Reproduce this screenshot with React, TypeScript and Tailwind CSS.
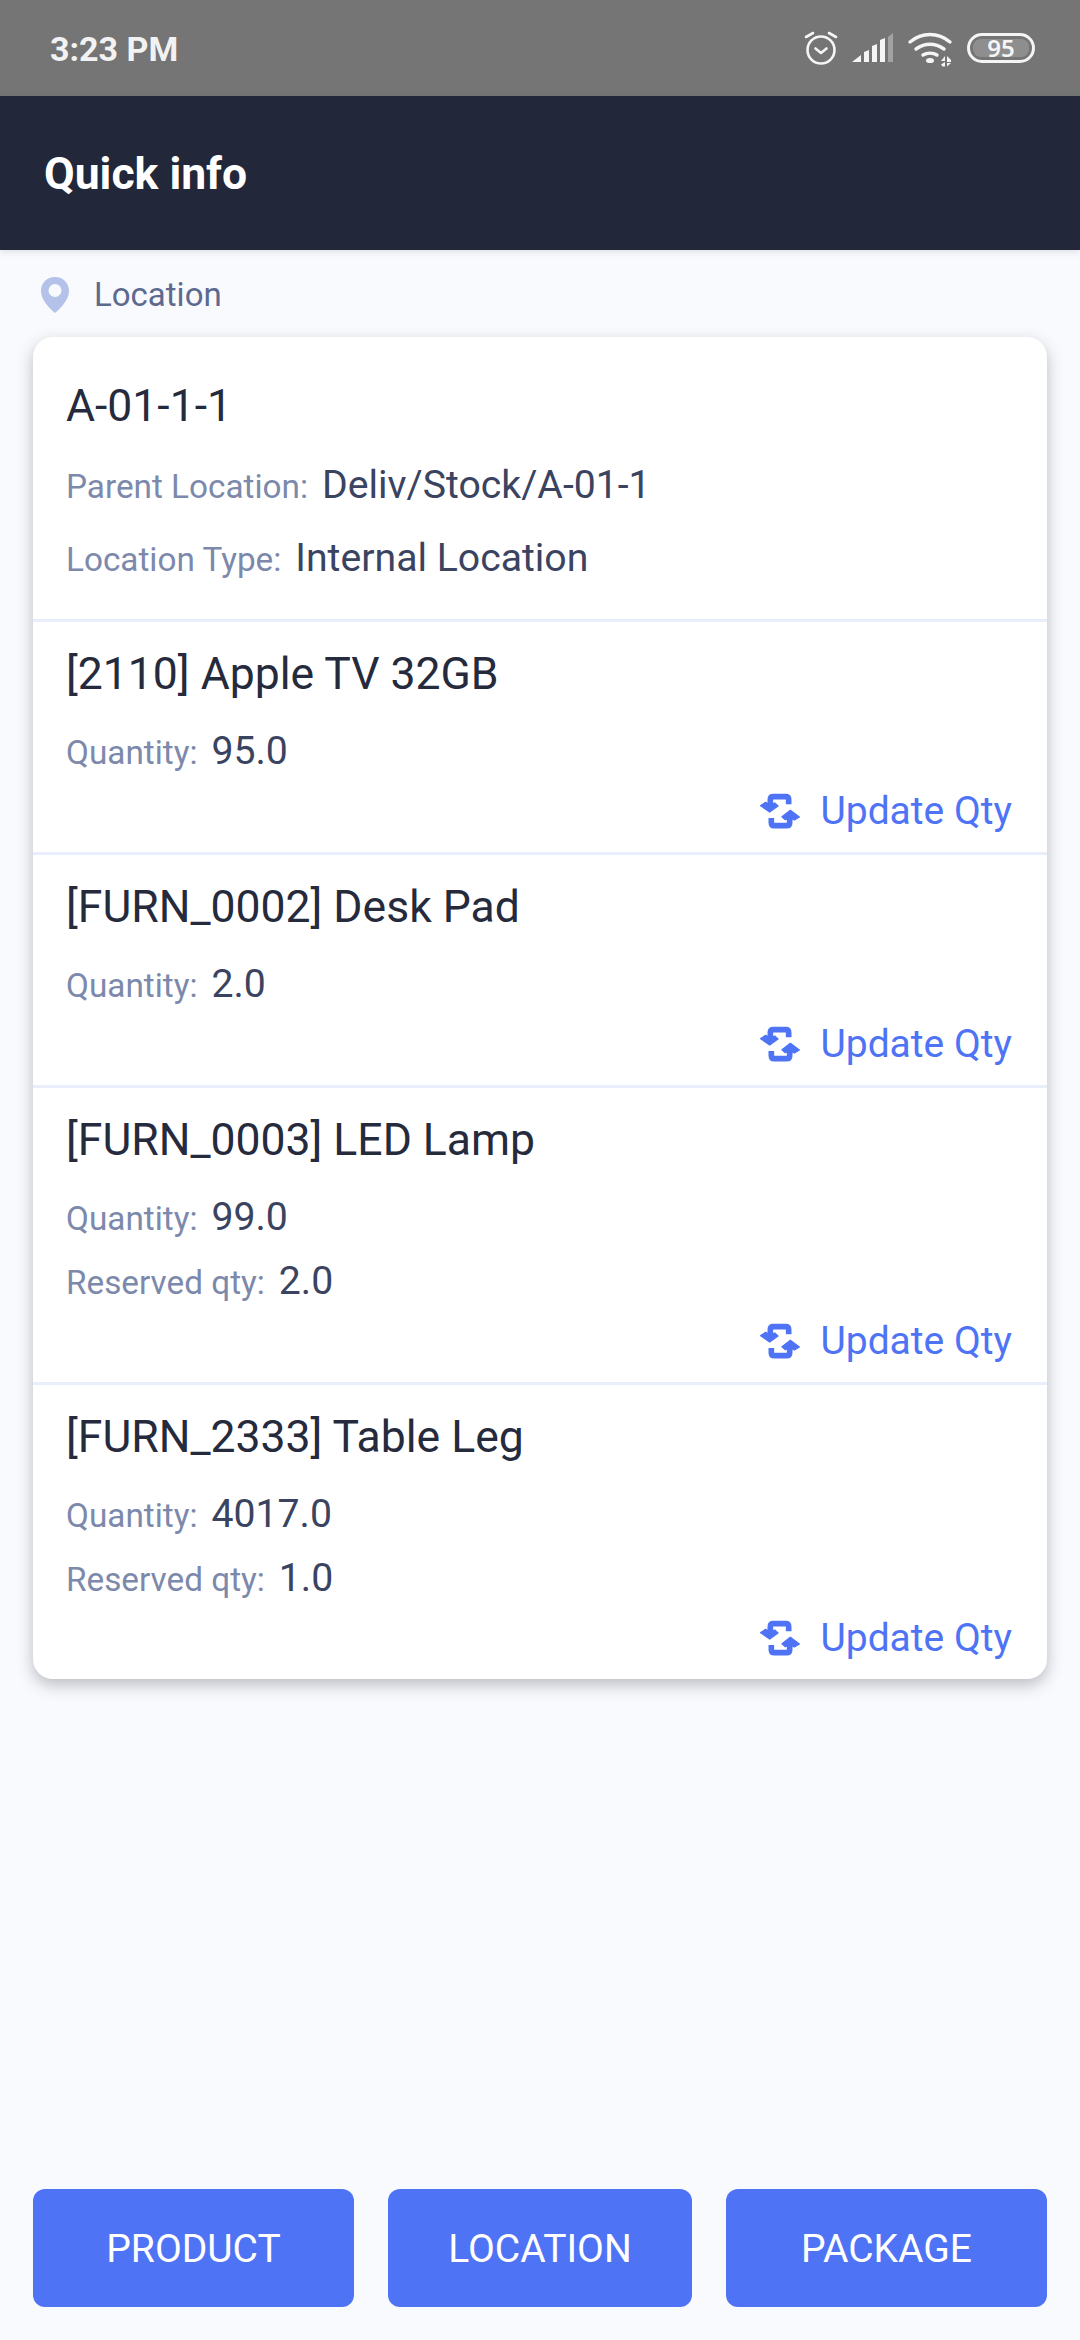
type Item = {
    name: string;
    quantity: string;
    reserved?: string;
};

const items: Item[] = [
    { name: "[2110] Apple TV 32GB", quantity: "95.0" },
    { name: "[FURN_0002] Desk Pad", quantity: "2.0" },
    { name: "[FURN_0003] LED Lamp", quantity: "99.0", reserved: "2.0" },
    { name: "[FURN_2333] Table Leg", quantity: "4017.0", reserved: "1.0" },
];

function StatusIcons() {
    return (
        <svg width="232" height="38" viewBox="0 0 232 38" fill="none" className="block">
            {/* alarm */}
            <g stroke="#f5f5f5" strokeWidth="2.6" strokeLinecap="round" strokeLinejoin="round">
                <circle cx="17" cy="20" r="13.500" />
                <path d="M11.500 18.500l5.500 4.500 5.500-4.500" />
                <path d="M2 7l7-4M32 7l-7-4" />
            </g>
            {/* signal */}
            <path d="M48 32l9-7v7z" fill="#f5f5f5" />
            <path d="M60 22l5-2v12h-5zM68 16l5-2v18h-5zM76 10l5-2v24h-5z" fill="#f5f5f5" />
            <path d="M84 7l5-4v29h-5z" fill="#f5f5f5" fillOpacity="0.35" />
            {/* wifi */}
            <g stroke="#f5f5f5" strokeWidth="3.400" strokeLinecap="round">
                <path d="M106 12c12-10 28-10 40 0" />
                <path d="M112 19c9-6 19-6 28 0" />
                <path d="M119 25c4-2.500 10-2.500 14 0" />
            </g>
            <ellipse cx="126" cy="30.500" rx="4" ry="2.600" fill="#f5f5f5" />
            <path d="M141 26v5h-4zM141 32v4.500h-2.500l-1.500-2zM143 26l4 4v2h-4zM143 33h4l-4 3.500z" fill="#f5f5f5" />
            {/* battery */}
            <rect x="164.500" y="4.500" width="65" height="27" rx="13.500" stroke="#f5f5f5" strokeWidth="3" />
            <rect x="169" y="9" width="56" height="18" rx="8" fill="#f5f5f5" fillOpacity="0.2" />
        </svg>
    );
}

function RefreshIcon() {
    return (
        <svg width="40" height="38" viewBox="30 25 120 114" fill="none" className="block">
            <g stroke="#4f73f5" strokeWidth="17">
                <path d="M61 72V48q0-9 9-9h37q9 0 9 9v14" />
                <path d="M119 93v24q0 9-9 9H73q-9 0-9-9v-14" />
            </g>
            <g fill="#4f73f5" stroke="#4f73f5" strokeWidth="4" strokeLinejoin="round">
                <path d="M32 66l15-10 13 8 14-6 10 9-25 18z" />
                <path d="M148 100l-15 9-13-7-14 6-10-9 25-19z" />
            </g>
        </svg>
    );
}

function PinIcon() {
    return (
        <svg width="28" height="36" viewBox="0 0 28 36" className="block">
            <path
                fillRule="evenodd"
                fill="#b4c1e8"
                d="M14 0c8 0 14 6 14 14 0 8-7 16-14 22C7 30 0 22 0 14 0 6 6 0 14 0zm0 7a6.500 6.500 0 1 0 0 13 6.500 6.500 0 0 0 0-13z"
            />
        </svg>
    );
}

function Field({ label, value }: { label: string; value: string }) {
    return (
        <div className="flex items-baseline gap-[14px]">
            <span className="text-[33.300px] leading-[44px] text-[#7c89ab]">{label}</span>
            <span className="text-[39.200px] leading-[44px] text-[#3a4360]">{value}</span>
        </div>
    );
}

function ItemRow({ item }: { item: Item }) {
    return (
        <div className="border-t-[3px] border-[#e9eefb] pl-[33px] pr-[35px] pt-[24px] pb-[15px]">
            <div className="text-[44.500px] leading-[56px] text-[#252a3c]">{item.name}</div>
            <div className="mt-[27px] flex flex-col gap-[18px]">
                <Field label="Quantity:" value={item.quantity} />
                {item.reserved && <Field label="Reserved qty:" value={item.reserved} />}
            </div>
            <div className="mt-[10px] flex items-center justify-end gap-[20px]">
                <RefreshIcon />
                <span className="text-[39px] leading-[52px] text-[#4f73f5]">Update Qty</span>
            </div>
        </div>
    );
}

export default function App() {
    return (
        <div className="flex min-h-[2340px] flex-col bg-[#f9fafd] font-['Roboto',sans-serif]">
            <div className="flex h-[96px] items-center justify-between bg-[#757575] pl-[50px] pr-[44px] pt-[2px]">
                <span className="text-[34px] font-bold text-[#f2f2f2]">3:23 PM</span>
                <div className="relative">
                    <StatusIcons />
                    <span className="absolute left-[163px] top-[2px] w-[68px] text-center font-['Noto_Sans',sans-serif] text-[24px] leading-[32px] font-semibold text-[#f5f5f5]">
                        95
                    </span>
                </div>
            </div>

            <div className="flex h-[154px] items-center bg-[#222739] px-[44px] pt-[2px] shadow-[0_2px_6px_rgba(30,40,70,0.12)]">
                <h1 className="text-[44.500px] font-bold text-white">Quick info</h1>
            </div>

            <div className="flex h-[87px] items-center gap-[25px] pl-[41px] pt-[2px]">
                <PinIcon />
                <span className="text-[33px] text-[#5d6a8f]">Location</span>
            </div>

            <div className="mx-[33px] overflow-hidden rounded-[20px] bg-white shadow-[0_6px_16px_rgba(40,45,60,0.3)]">
                <div className="pl-[33px] pr-[35px] pt-[41px] pb-[37px]">
                    <div className="text-[44.500px] leading-[56px] text-[#252a3c]">A-01-1-1</div>
                    <div className="mt-[29px] flex flex-col gap-[27px]">
                        <Field label="Parent Location:" value="Deliv/Stock/A-01-1" />
                        <Field label="Location Type:" value="Internal Location" />
                    </div>
                </div>
                {items.map((item) => (
                    <ItemRow key={item.name} item={item} />
                ))}
            </div>

            <div className="mt-auto mb-[33px] flex gap-[34px] px-[33px]">
                <button className="h-[118px] w-[321px] rounded-[12px] bg-[#4f73f5] pt-[2px] text-[39px] text-white">PRODUCT</button>
                <button className="h-[118px] flex-1 rounded-[12px] bg-[#4f73f5] pt-[2px] text-[39px] text-white">LOCATION</button>
                <button className="h-[118px] w-[321px] rounded-[12px] bg-[#4f73f5] pt-[2px] text-[39px] text-white">PACKAGE</button>
            </div>
        </div>
    );
}
